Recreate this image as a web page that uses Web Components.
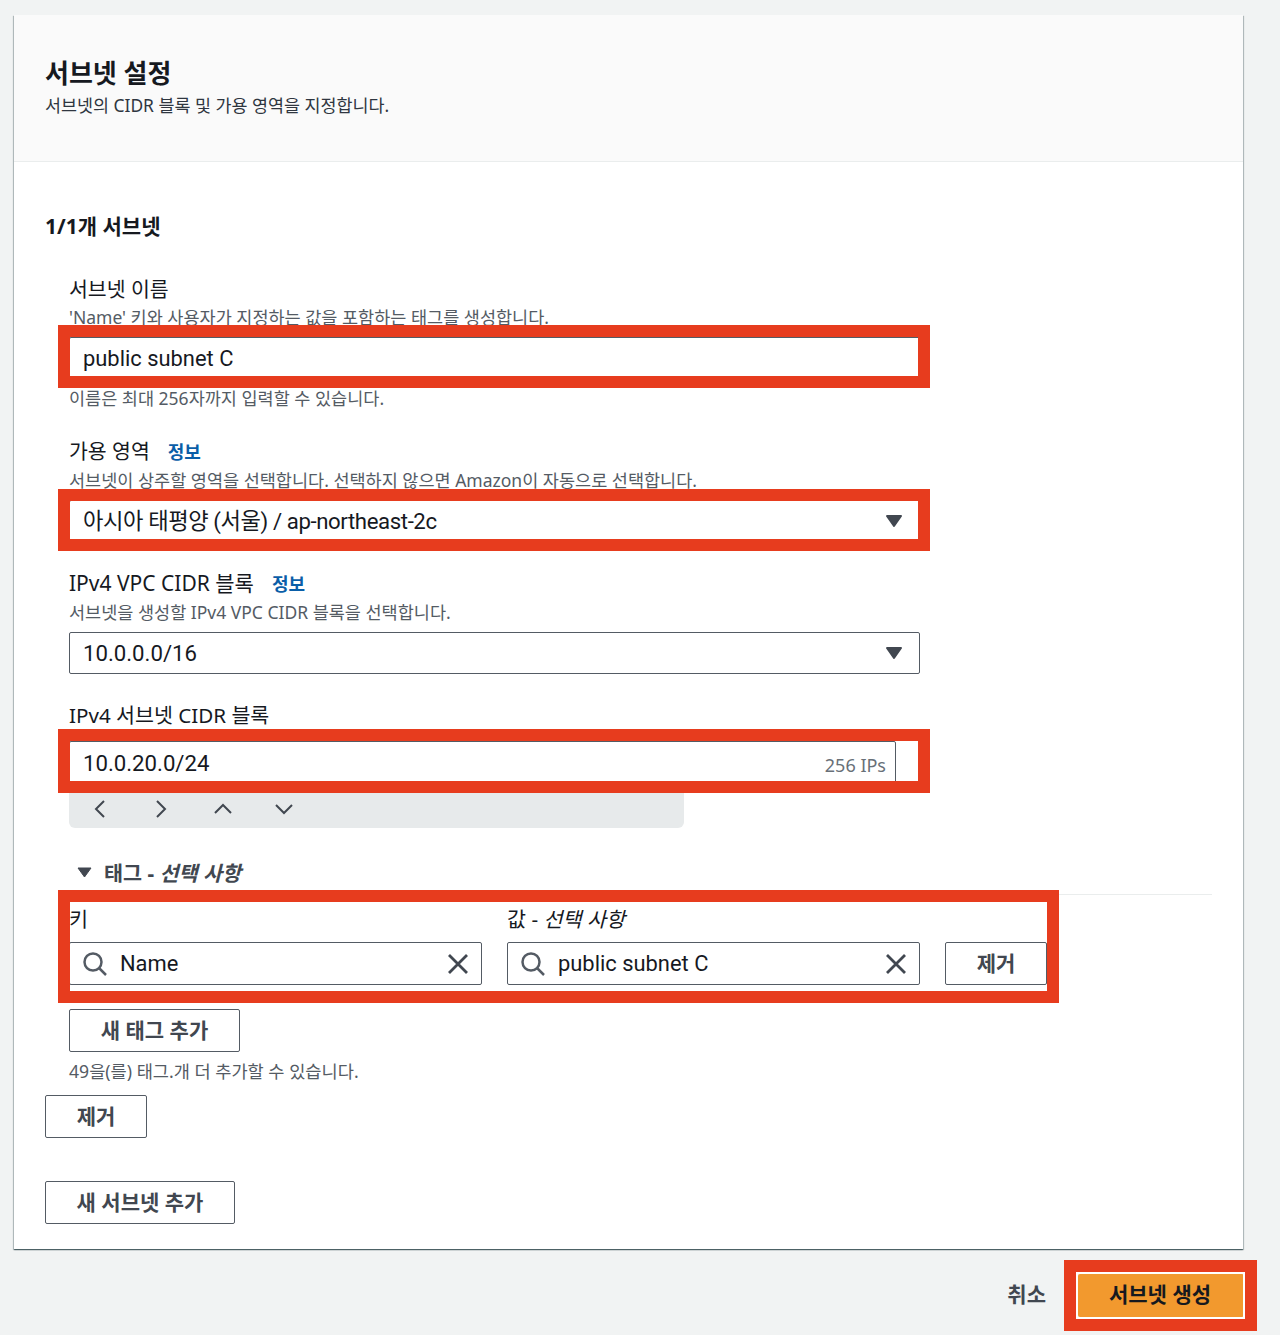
<!DOCTYPE html>
<html lang="ko">
<head>
<meta charset="utf-8">
<title>서브넷 설정</title>
<style>
html, body {
  margin: 0;
  background: #f1f3f3;
  color: #16191f;
  font-family: "Noto Sans", "Noto Sans CJK KR", sans-serif;
}
</style>
</head>
<body>
<subnet-page>
  <settings-card heading="서브넷 설정" description="서브넷의 CIDR 블록 및 가용 영역을 지정합니다.">
    <h-count>1/1개 서브넷</h-count>
    <div style="padding-left:24px">
      <form-field label="서브넷 이름" description="'Name' 키와 사용자가 지정하는 값을 포함하는 태그를 생성합니다." constraint="이름은 최대 256자까지 입력할 수 있습니다." style="--lh:24px">
        <red-mark style="--t:-12px;--r:-10px;--b:-9px;--l:-11px"><text-box>public subnet C</text-box></red-mark>
      </form-field>
      <form-field label="가용 영역" info description="서브넷이 상주할 영역을 선택합니다. 선택하지 않으면 Amazon이 자동으로 선택합니다." style="margin-top:32px">
        <red-mark style="--t:-11px;--r:-10px;--b:-9px;--l:-11px"><select-box style="letter-spacing:-0.4px">아시아 태평양 (서울) / ap-northeast-2c</select-box></red-mark>
      </form-field>
      <form-field label="IPv4 VPC CIDR 블록" info description="서브넷을 생성할 IPv4 VPC CIDR 블록을 선택합니다." style="margin-top:30px;--size:21px">
        <select-box>10.0.0.0/16</select-box>
      </form-field>
      <form-field label="IPv4 서브넷 CIDR 블록" style="margin-top:30px;--size:20.6px" compact>
        <red-mark style="--t:-12px;--r:-10px;--b:-8px;--l:-11px"><cidr-box ips="256 IPs">10.0.20.0/24</cidr-box></red-mark>
        <cidr-stepper></cidr-stepper>
      </form-field>
      <tag-section style="margin-top:32px">
        <red-mark style="--t:-17px;--r:-12px;--b:-18px;--l:-11px;width:978px"><tag-row tagkey="Name" tagvalue="public subnet C"></tag-row></red-mark>
      </tag-section>
      <aws-button style="margin-top:24px;width:171px">새 태그 추가</aws-button>
      <hint-line>49을(를) 태그.개 더 추가할 수 있습니다.</hint-line>
    </div>
    <aws-button style="margin-top:14px;width:102px">제거</aws-button>
    <aws-button style="margin-top:43px;width:190px">새 서브넷 추가</aws-button>
  </settings-card>
  <form-footer></form-footer>
</subnet-page>

<script>
class SubnetPage extends HTMLElement {
  constructor() {
    super();
    this.attachShadow({ mode: "open" });
    this.shadowRoot.innerHTML = `
<style>
:host { display: block; padding: 15px 0 18px 14px; width: 1266px; box-sizing: border-box; }
</style>
<slot></slot>`;
  }
}
customElements.define('subnet-page', SubnetPage);

class SettingsCard extends HTMLElement {
  constructor() {
    super();
    this.attachShadow({ mode: "open" });
    this.shadowRoot.innerHTML = `
<style>
:host {
  display: block;
  width: 1229px;
  background: #fff;
  box-shadow: 0 1px 1px rgba(0, 28, 36, 0.5), 1px 1px 1px rgba(0, 28, 36, 0.2), -1px 1px 1px rgba(0, 28, 36, 0.2);
}
header {
  height: 147px;
  box-sizing: border-box;
  padding: 42px 31px 0;
  background: #fafafa;
  border-bottom: 1px solid #eaeded;
}
h2 { margin: 0; font-size: 26px; line-height: 32px; font-weight: 700; }
p { margin: 0; font-size: 17.4px; line-height: 32px; color: #2f3640; }
main { padding: 51px 31px 25px; }
</style>
<header><h2></h2><p></p></header>
<main><slot></slot></main>`;
    this.shadowRoot.querySelector('h2').textContent = this.getAttribute('heading');
    this.shadowRoot.querySelector('p').textContent = this.getAttribute('description');
  }
}
customElements.define('settings-card', SettingsCard);

class HCount extends HTMLElement {
  constructor() {
    super();
    this.attachShadow({ mode: "open" });
    this.shadowRoot.innerHTML = `
<style>
:host { display: block; height: 64px; font-size: 21px; line-height: 26px; font-weight: 700; }
</style>
<slot></slot>`;
  }
}
customElements.define('h-count', HCount);

class FormField extends HTMLElement {
  constructor() {
    super();
    this.attachShadow({ mode: "open" });
    this.shadowRoot.innerHTML = `
<style>
:host { display: block; }
.label { font-size: var(--size, 20.5px); line-height: var(--lh, 22px); height: 22px; white-space: nowrap; color: #16191f; }
.info { margin-left: 18px; font-size: 18px; font-weight: 700; color: #0a5ea8; }
.desc { margin-top: 7px; height: 22px; font-size: 17.5px; line-height: 22px; color: #545b64; white-space: nowrap; }
.control { margin-top: 9px; width: 851px; }
.constraint { margin-top: 8px; height: 21px; font-size: 17.5px; line-height: 22px; color: #545b64; white-space: nowrap; }
:host([compact]) .control { margin-top: 15px; }
</style>
<div class="label"></div>
<div class="desc"></div>
<div class="control"><slot></slot></div>
<div class="constraint"></div>`;
    const root = this.shadowRoot;
    root.querySelector('.label').textContent = this.getAttribute('label');
    if (this.hasAttribute('info')) {
      const info = document.createElement('span');
      info.className = 'info';
      info.textContent = '정보';
      root.querySelector('.label').appendChild(info);
    }
    const desc = this.getAttribute('description');
    if (desc) root.querySelector('.desc').textContent = desc;
    else root.querySelector('.desc').remove();
    const constraint = this.getAttribute('constraint');
    if (constraint) root.querySelector('.constraint').textContent = constraint;
    else root.querySelector('.constraint').remove();
  }
}
customElements.define('form-field', FormField);

// the red annotation frame that sits over whatever it wraps
class RedMark extends HTMLElement {
  constructor() {
    super();
    this.attachShadow({ mode: "open" });
    this.shadowRoot.innerHTML = `
<style>
:host { display: block; position: relative; }
.frame {
  position: absolute;
  top: var(--t); right: var(--r); bottom: var(--b); left: var(--l);
  border: 12px solid #e73c1e;
  pointer-events: none;
}
</style>
<slot></slot><div class="frame"></div>`;
  }
}
customElements.define('red-mark', RedMark);

const boxStyles = `
:host { display: block; }
.box {
  display: flex;
  align-items: center;
  box-sizing: border-box;
  height: 42px;
  padding: 0 13px;
  background: #fff;
  border: 1px solid #545b64;
  border-radius: 2px;
  font-family: Roboto, "Noto Sans CJK KR", sans-serif;
  font-size: 22.2px;
  line-height: 26px;
  color: #16191f;
  white-space: nowrap;
}
`;

class TextBox extends HTMLElement {
  constructor() {
    super();
    this.attachShadow({ mode: "open" });
    this.shadowRoot.innerHTML = `<style>${boxStyles}
.box { font-size: 21.9px; padding-top: 1px; }
</style><div class="box"><slot></slot></div>`;
  }
}
customElements.define('text-box', TextBox);

class SelectBox extends HTMLElement {
  constructor() {
    super();
    this.attachShadow({ mode: "open" });
    this.shadowRoot.innerHTML = `
<style>${boxStyles}
svg { margin-left: auto; margin-right: 3px; }
</style>
<div class="box"><slot></slot>
<svg width="18" height="14" viewBox="0 0 18 14"><path d="M2 2h14L9 12z" fill="#414750" stroke="#414750" stroke-width="2" stroke-linejoin="round"/></svg>
</div>`;
  }
}
customElements.define('select-box', SelectBox);

class CidrBox extends HTMLElement {
  constructor() {
    super();
    this.attachShadow({ mode: "open" });
    this.shadowRoot.innerHTML = `
<style>${boxStyles}
.box { height: 44px; width: 827px; padding-right: 9px; }
span { margin: 3px 0 0 auto; font-family: "Noto Sans", sans-serif; font-size: 18px; color: #687078; }
</style>
<div class="box"><slot></slot><span></span></div>`;
    this.shadowRoot.querySelector('span').textContent = this.getAttribute('ips');
  }
}
customElements.define('cidr-box', CidrBox);

class CidrStepper extends HTMLElement {
  constructor() {
    super();
    this.attachShadow({ mode: "open" });
    const arrow = (d) => `<button><svg width="20" height="20" viewBox="0 0 20 20"><path d="${d}" fill="none" stroke="#414750" stroke-width="2"/></svg></button>`;
    this.shadowRoot.innerHTML = `
<style>
:host {
  display: flex;
  width: 615px;
  height: 37px;
  box-sizing: border-box;
  margin-top: 6px;
  padding: 0 0 1px 21px;
  gap: 41.4px;
  align-items: center;
  background: #e7eaeb;
  border-radius: 0 0 6px 6px;
}
button { display: block; width: 20px; height: 20px; padding: 0; border: 0; background: none; }
svg { display: block; }
</style>
${arrow('M14 2 6 10l8 8')}${arrow('M6 2l8 8-8 8')}${arrow('M2 14l8-8 8 8')}${arrow('M2 6l8 8 8-8')}`;
  }
}
customElements.define('cidr-stepper', CidrStepper);

class TagSection extends HTMLElement {
  constructor() {
    super();
    this.attachShadow({ mode: "open" });
    this.shadowRoot.innerHTML = `
<style>
:host { display: block; }
.head {
  display: flex;
  align-items: center;
  height: 35px;
  box-sizing: border-box;
  padding: 0 0 10px 8px;
  border-bottom: 1px solid #eaeded;
  font-size: 20.7px;
  font-weight: 700;
  color: #414750;
  white-space: nowrap;
}
svg { margin-right: 12px; }
i { font-weight: 700; font-style: italic; }
.body { margin-top: 12px; }
</style>
<div class="head">
  <svg width="15" height="11" viewBox="0 0 15 11"><path d="M1 1h13L7.500 10z" fill="#414750" stroke="#414750" stroke-linejoin="round"/></svg>
  <span>태그 - <i>선택 사항</i></span>
</div>
<div class="body"><slot></slot></div>`;
  }
}
customElements.define('tag-section', TagSection);

class TagRow extends HTMLElement {
  constructor() {
    super();
    this.attachShadow({ mode: "open" });
    this.shadowRoot.innerHTML = `
<style>
:host {
  display: grid;
  width: 978px;
  grid-template-columns: 413px 413px 102px;
  column-gap: 25px;
  row-gap: 11px;
  align-items: center;
}
.lab { font-size: 20.7px; line-height: 24px; color: #16191f; white-space: nowrap; }
i { font-style: italic; }
</style>
<div class="lab">키</div>
<div class="lab">값 - <i>선택 사항</i></div>
<div></div>
<search-box class="k"></search-box>
<search-box class="v"></search-box>
<aws-button style="height:43px">제거</aws-button>`;
    this.shadowRoot.querySelector('.k').textContent = this.getAttribute('tagkey');
    this.shadowRoot.querySelector('.v').textContent = this.getAttribute('tagvalue');
  }
}
customElements.define('tag-row', TagRow);

class SearchBox extends HTMLElement {
  constructor() {
    super();
    this.attachShadow({ mode: "open" });
    this.shadowRoot.innerHTML = `
<style>${boxStyles}
.box { height: 43px; padding: 0 11px 0 13px; font-size: 21.9px; }
.search { margin-right: 13px; flex: none; }
.clear { margin-left: auto; flex: none; }
</style>
<div class="box">
  <svg class="search" width="24" height="24" viewBox="0 0 24 24" fill="none" stroke="#545b64" stroke-width="2.500"><circle cx="10" cy="10" r="8.500"/><path d="M16 16l7 7"/></svg>
  <slot></slot>
  <svg class="clear" width="24" height="24" viewBox="0 0 24 24" fill="none" stroke="#414750" stroke-width="2.800"><path d="M3 3l18 18M21 3 3 21"/></svg>
</div>`;
  }
}
customElements.define('search-box', SearchBox);

class AwsButton extends HTMLElement {
  constructor() {
    super();
    this.attachShadow({ mode: "open" });
    this.shadowRoot.innerHTML = `
<style>
:host {
  display: flex;
  align-items: center;
  justify-content: center;
  box-sizing: border-box;
  height: 43px;
  padding-bottom: 2px;
  background: #fff;
  border: 1px solid #545b64;
  border-radius: 2px;
  font-size: 21px;
  line-height: 26px;
  font-weight: 700;
  color: #414750;
  white-space: nowrap;
}
</style>
<slot></slot>`;
  }
}
customElements.define('aws-button', AwsButton);

class HintLine extends HTMLElement {
  constructor() {
    super();
    this.attachShadow({ mode: "open" });
    this.shadowRoot.innerHTML = `
<style>
:host { display: block; margin-top: 8px; height: 21px; font-size: 17.6px; line-height: 22px; color: #545b64; white-space: nowrap; }
</style>
<slot></slot>`;
  }
}
customElements.define('hint-line', HintLine);

class FormFooter extends HTMLElement {
  constructor() {
    super();
    this.attachShadow({ mode: "open" });
    this.shadowRoot.innerHTML = `
<style>
:host {
  display: flex;
  justify-content: flex-end;
  align-items: center;
  width: 1230px;
  margin-top: 25px;
  gap: 32px;
  font-size: 21px;
  line-height: 26px;
  font-weight: 700;
}
.cancel { color: #414750; padding-bottom: 3px; }
.primary {
  display: flex;
  align-items: center;
  justify-content: center;
  box-sizing: border-box;
  width: 166px;
  height: 43px;
  padding: 0 2px 3px 0;
  background: #f2992e;
  border-radius: 2px;
  color: #16191f;
  position: relative;
}
.primary::after {
  content: "";
  position: absolute;
  top: -14px; right: -13px; bottom: -14px; left: -14px;
  border: 12px solid #e73c1e;
  box-shadow: inset 0 0 0 2px #fff;
}
</style>
<span class="cancel">취소</span>
<div class="primary">서브넷 생성</div>`;
  }
}
customElements.define('form-footer', FormFooter);
</script>
</body>
</html>
